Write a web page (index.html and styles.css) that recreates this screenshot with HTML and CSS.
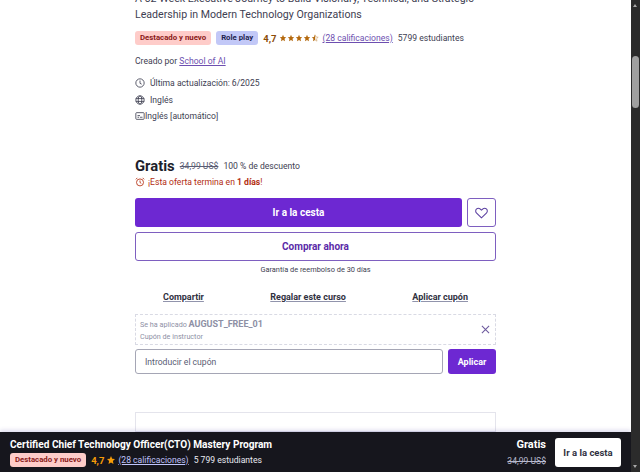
FILE: index.html
```html
<!DOCTYPE html>
<html lang="es">
<head>
    <meta charset="UTF-8">
    <title>Certified Chief Technology Officer(CTO) Mastery Program</title>
    <link rel="stylesheet" href="styles.css">
</head>
<body>

    <div class="page">
        <div class="content">
            <p class="subtitle">A 52-Week Executive Journey to Build Visionary, Technical, and Strategic Leadership in Modern Technology Organizations</p>

            <!-- Badges and rating -->
            <div class="meta-row">
                <span class="badge badge-red">Destacado y nuevo</span>
                <span class="badge badge-blue">Role play</span>
                <span class="rating">4,7</span>
                <svg class="stars" viewBox="0 0 50 10" width="40" height="8">
                    <polygon points="5,0 6.5,3.4 10,3.8 7.4,6.2 8.1,10 5,8 1.9,10 2.6,6.2 0,3.8 3.5,3.4" transform="translate(1 1) scale(.8)"/>
                    <polygon points="5,0 6.5,3.4 10,3.8 7.4,6.2 8.1,10 5,8 1.9,10 2.6,6.2 0,3.8 3.5,3.4" transform="translate(11 1) scale(.8)"/>
                    <polygon points="5,0 6.5,3.4 10,3.8 7.4,6.2 8.1,10 5,8 1.9,10 2.6,6.2 0,3.8 3.5,3.4" transform="translate(21 1) scale(.8)"/>
                    <polygon points="5,0 6.5,3.4 10,3.8 7.4,6.2 8.1,10 5,8 1.9,10 2.6,6.2 0,3.8 3.5,3.4" transform="translate(31 1) scale(.8)"/>
                    <polygon points="5,0 5,8 1.9,10 2.6,6.2 0,3.8 3.5,3.4" transform="translate(41 1) scale(.8)"/>
                    <polygon class="star-empty" points="5,0 6.5,3.4 10,3.8 7.4,6.2 8.1,10 5,8" transform="translate(41 1) scale(.8)"/>
                </svg>
                <a class="link" href="#">(28 calificaciones)</a>
                <span>5799 estudiantes</span>
            </div>

            <p class="created">Creado por <a class="link" href="#">School of AI</a></p>

            <ul class="facts">
                <li>
                    <svg class="icon" viewBox="0 0 12 12" width="10" height="10"><circle cx="6" cy="6" r="5"/><path d="M6 3v3.4l2 1"/></svg>
                    <span>Última actualización: 6/2025</span>
                </li>
                <li>
                    <svg class="icon" viewBox="0 0 12 12" width="10" height="10"><circle cx="6" cy="6" r="5"/><ellipse cx="6" cy="6" rx="2.2" ry="5"/><path d="M1 4.3h10M1 7.7h10"/></svg>
                    <span>Inglés</span>
                </li>
                <li class="fact-tight">
                    <svg class="icon" viewBox="0 0 12 12" width="10" height="10"><rect x="1" y="2" width="10" height="8" rx="1"/><path d="M3 7.500h2M6 7.500h3M3 5.500h3"/></svg>
                    <span>Inglés [automático]</span>
                </li>
            </ul>

            <!-- Price -->
            <div class="price-row">
                <span class="price">Gratis</span>
                <s class="old-price">34,99 US$</s>
                <span>100 % de descuento</span>
            </div>
            <div class="offer">
                <svg class="icon" viewBox="0 0 12 12" width="10" height="10"><circle cx="6" cy="6.5" r="4.2"/><path d="M6 4.2v2.4l1.5 1M1 2.8 2.8 1M11 2.8 9.2 1"/></svg>
                <span>¡Esta oferta termina en <b>1 días</b>!</span>
            </div>

            <!-- Buttons -->
            <div class="cart-row">
                <button class="btn btn-primary btn-grow">Ir a la cesta</button>
                <button class="btn btn-wish" aria-label="Lista de deseos">
                    <svg viewBox="0 0 16 14" width="13" height="12"><path d="M8 13 2 7.2C.4 5.600.5 3.200 2 2c1.600-1.300 3.900-.9 6 1.400C10.100 1.100 12.400.7 14 2c1.500 1.200 1.600 3.600 0 5.200z"/></svg>
                </button>
            </div>
            <button class="btn btn-outline">Comprar ahora</button>
            <p class="guarantee">Garantía de reembolso de 30 días</p>

            <div class="actions">
                <a href="#">Compartir</a>
                <a href="#">Regalar este curso</a>
                <a href="#">Aplicar cupón</a>
            </div>

            <!-- Coupon -->
            <div class="coupon">
                <div>
                    <p class="coupon-line">Se ha aplicado <b>AUGUST_FREE_01</b></p>
                    <p class="coupon-note">Cupón de instructor</p>
                </div>
                <svg class="coupon-close" viewBox="0 0 10 10" width="9" height="9"><path d="M1 1l8 8M9 1l-8 8"/></svg>
            </div>
            <div class="coupon-form">
                <input class="coupon-input" type="text" placeholder="Introducir el cupón">
                <button class="btn btn-primary btn-apply">Aplicar</button>
            </div>

            <div class="next-card">
                <h2>Lo que aprenderás</h2>
            </div>
        </div>

        <!-- Sticky purchase bar -->
        <div class="sticky-bar">
            <div class="sticky-info">
                <p class="sticky-title">Certified Chief Technology Officer(CTO) Mastery Program</p>
                <div class="sticky-meta">
                    <span class="badge badge-red">Destacado y nuevo</span>
                    <span class="sticky-rating">4,7</span>
                    <svg class="stars sticky-star" viewBox="0 0 10 10" width="8" height="8"><polygon points="5,0 6.5,3.4 10,3.8 7.4,6.2 8.1,10 5,8 1.900,10 2.600,6.200 0,3.800 3.500,3.400"/></svg>
                    <a class="sticky-link" href="#">(28 calificaciones)</a>
                    <span>5 799 estudiantes</span>
                </div>
            </div>
            <div class="sticky-price">
                <b>Gratis</b>
                <s>34,99 US$</s>
            </div>
            <button class="btn btn-white">Ir a la cesta</button>
        </div>
    </div>

    <!-- Scrollbar -->
    <div class="scrollbar">
        <span class="arrow arrow-up"></span>
        <span class="thumb"></span>
        <span class="arrow arrow-down"></span>
    </div>

</body>
</html>
```

FILE: styles.css
```css
* {
    margin: 0;
    padding: 0;
    box-sizing: border-box;
}

body {
    font-family: 'Roboto', sans-serif;
    font-size: 8.6px;
    color: #3e4052;
    background-color: white;
    height: 100vh;
    display: flex;
    overflow: hidden;
}

.page {
    position: relative;
    flex: 1;
    overflow: hidden;
}

.content {
    width: 361px;
    margin: -9px 0 0 135px;
}

.subtitle {
    font-size: 10.6px;
    line-height: 16px;
}

.meta-row {
    display: flex;
    align-items: center;
    margin-top: 8px;
    height: 14px;
}

.meta-row > span:last-child {
    margin-left: 5px;
}

.badge {
    display: inline-block;
    height: 14px;
    line-height: 14px;
    padding: 0 5px;
    border-radius: 3px;
    font-size: 7.8px;
    font-weight: 700;
}

.badge-red {
    background-color: #feccc9;
    color: #8b1a18;
}

.badge-blue {
    margin-left: 5px;
    background-color: #c2c8f7;
    color: #1e2350;
}

.rating {
    margin-left: 5px;
    font-size: 9.5px;
    font-weight: 700;
    color: #8b4c08;
}

.stars {
    margin-left: 3px;
    fill: #b4690e;
}

.star-empty {
    fill: none;
    stroke: #b4690e;
    stroke-width: 0.6;
}

.link {
    color: #6d4fb0;
    text-decoration: underline;
}

.meta-row .link {
    margin-left: 3px;
}

.created {
    margin-top: 10px;
    line-height: 12px;
}

.facts {
    list-style: none;
    margin-top: 10px;
}

.facts li {
    display: flex;
    align-items: center;
    gap: 5px;
    height: 12px;
    margin-bottom: 4.5px;
}

.facts .fact-tight {
    gap: 0;
}

.icon {
    fill: none;
    stroke: currentColor;
    stroke-width: 1;
    flex-shrink: 0;
}

.price-row {
    display: flex;
    align-items: center;
    gap: 5px;
    margin-top: 34.5px;
    height: 18px;
}

.price {
    font-size: 14.8px;
    font-weight: 700;
    color: #1d1e2b;
}

.old-price {
    color: #595c73;
}

.offer {
    display: flex;
    align-items: center;
    gap: 3px;
    height: 14px;
    color: #b32d0f;
}

.btn {
    font-family: inherit;
    font-size: 10px;
    font-weight: 700;
    border-radius: 3px;
    border: none;
    background: none;
    cursor: pointer;
}

.cart-row {
    display: flex;
    gap: 5px;
    margin-top: 9.5px;
}

.btn-grow {
    flex: 1;
}

.btn-primary {
    height: 29px;
    background-color: #6d28d2;
    color: white;
}

.btn-wish {
    width: 29px;
    height: 29px;
    border: 1px solid #7e5fc0;
    display: flex;
    align-items: center;
    justify-content: center;
}

.btn-wish svg {
    fill: none;
    stroke: #5b3fa0;
    stroke-width: 1.3;
}

.btn-outline {
    display: block;
    width: 100%;
    height: 29px;
    margin-top: 5px;
    border: 1px solid #7e5fc0;
    color: #5a2aa8;
}

.guarantee {
    margin-top: 3px;
    text-align: center;
    font-size: 7.4px;
    line-height: 12px;
}

.actions {
    display: flex;
    justify-content: space-between;
    margin-top: 15px;
    padding: 0 28px;
}

.actions a {
    font-size: 9px;
    font-weight: 700;
    line-height: 12px;
    color: #303141;
    text-decoration: underline;
    text-decoration-color: #9194ac;
}

.coupon {
    display: flex;
    align-items: center;
    justify-content: space-between;
    margin-top: 11px;
    height: 31px;
    padding: 0 5px 0 4px;
    border: 1px dashed #d9dae4;
    color: #8e90a5;
}

.coupon-line {
    font-size: 7.2px;
    line-height: 12px;
}

.coupon-line b {
    font-size: 9px;
    font-weight: 700;
}

.coupon-note {
    font-size: 7.2px;
    line-height: 11px;
}

.coupon-close {
    fill: none;
    stroke: #6d5a9e;
    stroke-width: 1.2;
}

.coupon-form {
    display: flex;
    gap: 5px;
    margin-top: 4px;
}

.coupon-input {
    flex: 1;
    min-width: 0;
    height: 25px;
    padding: 0 9px;
    font-family: inherit;
    font-size: 8.6px;
    border: 1px solid #a5a6b5;
    border-radius: 3px;
    color: #595c73;
}

.coupon-input::placeholder {
    color: #595c73;
}

.btn-apply {
    width: 48px;
    height: 25px;
    font-size: 9px;
}

/* only the tips of the heading show above the sticky bar */
.next-card {
    height: 20px;
    margin-top: 38px;
    padding: 15px 0 0 16px;
    border: 1px solid #e4e4ec;
    overflow: hidden;
}

.next-card h2 {
    font-size: 14px;
    line-height: 20px;
    color: #303141;
}

.sticky-bar {
    position: absolute;
    left: 0;
    right: 0;
    bottom: 0;
    height: 40px;
    display: flex;
    align-items: center;
    padding: 0 10px;
    background-color: #16161d;
    box-shadow: 0 -2px 4px rgba(90, 80, 170, 0.2);
    color: #e9eaf2;
}

.sticky-info {
    flex: 1;
    padding-top: 1px;
}

.sticky-title {
    font-size: 10.1px;
    font-weight: 700;
    line-height: 14px;
    color: white;
}

.sticky-meta {
    display: flex;
    align-items: center;
    margin-top: 1px;
    height: 14px;
}

.sticky-rating {
    margin-left: 5px;
    font-size: 9.5px;
    font-weight: 700;
    color: #f69c08;
}

.sticky-star {
    margin-left: 3px;
    fill: #f69c08;
}

.sticky-link {
    margin-left: 3px;
    color: #c0c4fc;
    text-decoration: underline;
}

.sticky-meta > span:last-child {
    margin-left: 5px;
}

.sticky-price {
    display: flex;
    flex-direction: column;
    align-items: flex-end;
    gap: 5px;
    margin-right: 9px;
    font-size: 8.6px;
}

.sticky-price b {
    font-size: 11px;
    color: white;
}

.sticky-price s {
    color: #b7b9cd;
}

.btn-white {
    width: 66px;
    height: 29px;
    font-size: 9.5px;
    background-color: white;
    color: #303141;
}

.scrollbar {
    position: relative;
    width: 9px;
    background-color: #2b2b2b;
    flex-shrink: 0;
}

.thumb {
    position: absolute;
    top: 56px;
    left: 1px;
    width: 7px;
    height: 52px;
    border-radius: 4px;
    background-color: #9f9f9f;
}

.arrow {
    position: absolute;
    left: 2px;
    border-left: 2.5px solid transparent;
    border-right: 2.5px solid transparent;
}

.arrow-up {
    top: 4px;
    border-bottom: 3px solid #a8a8a8;
}

.arrow-down {
    bottom: 4px;
    border-top: 3px solid #a8a8a8;
}
```
